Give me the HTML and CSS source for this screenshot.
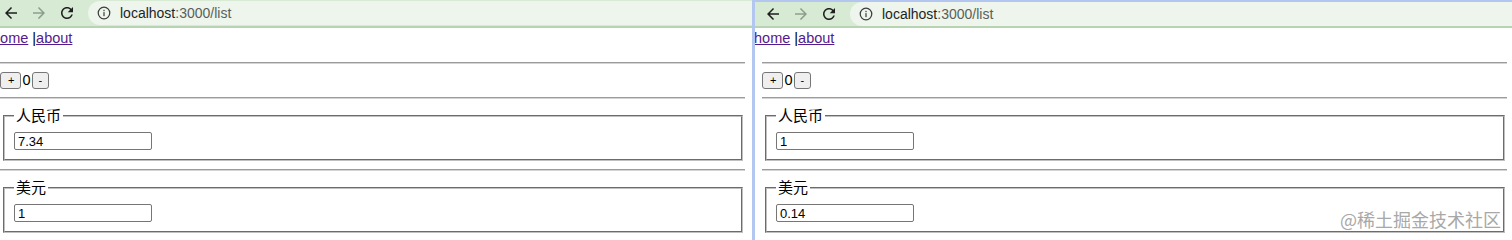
FILE: index.html
```html
<!DOCTYPE html>
<html lang="zh-CN">
<head>
<meta charset="utf-8">
<title>list</title>
<link rel="stylesheet" href="styles.css">
</head>
<body>
<div class="screen">
  <div class="win win-left">
    <div class="toolbar">
      <span class="tb-btn"><svg viewBox="0 0 24 24" width="18" height="18"><path fill="#1f1f1f" d="M20 11H7.83l5.59-5.59L12 4l-8 8 8 8 1.41-1.41L7.83 13H20v-2z"/></svg></span>
      <span class="tb-btn"><svg viewBox="0 0 24 24" width="18" height="18"><path fill="#8e9e8c" d="M12 4l-1.41 1.41L16.17 11H4v2h12.17l-5.58 5.59L12 20l8-8z"/></svg></span>
      <span class="tb-btn"><svg viewBox="0 0 24 24" width="18" height="18"><path fill="#1f1f1f" d="M17.65 6.35C16.2 4.9 14.21 4 12 4c-4.42 0-7.99 3.58-7.99 8s3.57 8 7.99 8c3.73 0 6.84-2.55 7.73-6h-2.08c-.82 2.33-3.04 4-5.65 4-3.31 0-6-2.690-6-6s2.69-6 6-6c1.66 0 3.14.69 4.22 1.78L13 11h7V4l-2.35 2.35z"/></svg></span>
      <div class="omnibox">
        <svg class="info" viewBox="0 0 16 16" width="14" height="14"><circle cx="8" cy="8" r="6.6" fill="none" stroke="#3c3c3c" stroke-width="1.4"/><rect x="7.3" y="7" width="1.4" height="4.6" fill="#3c3c3c"/><rect x="7.3" y="4.4" width="1.4" height="1.5" fill="#3c3c3c"/></svg>
        <span class="url"><span class="host">localhost</span>:3000/list</span>
      </div>
    </div>
    <div class="page">
      <div class="nav"><a href="#" class="link">home</a> |<a href="#" class="link">about</a></div>
      <hr class="rule rule-top">
      <div class="counter"><button class="btn">+</button><span class="count">0</span><button class="btn">-</button></div>
      <hr class="rule">
      <fieldset class="box"><legend class="box-title">人民币</legend><input class="field" value="7.34"></fieldset>
      <hr class="rule">
      <fieldset class="box"><legend class="box-title">美元</legend><input class="field" value="1"></fieldset>
    </div>
  </div>
  <div class="divider"></div>
  <div class="win win-right">
    <div class="toolbar">
      <span class="tb-btn"><svg viewBox="0 0 24 24" width="18" height="18"><path fill="#1f1f1f" d="M20 11H7.83l5.59-5.59L12 4l-8 8 8 8 1.41-1.41L7.83 13H20v-2z"/></svg></span>
      <span class="tb-btn"><svg viewBox="0 0 24 24" width="18" height="18"><path fill="#8e9e8c" d="M12 4l-1.41 1.41L16.17 11H4v2h12.17l-5.58 5.59L12 20l8-8z"/></svg></span>
      <span class="tb-btn"><svg viewBox="0 0 24 24" width="18" height="18"><path fill="#1f1f1f" d="M17.65 6.35C16.2 4.9 14.21 4 12 4c-4.42 0-7.99 3.58-7.99 8s3.57 8 7.99 8c3.73 0 6.84-2.55 7.73-6h-2.08c-.82 2.33-3.04 4-5.65 4-3.31 0-6-2.69-6-6s2.69-6 6-6c1.66 0 3.14.69 4.22 1.78L13 11h7V4l-2.35 2.35z"/></svg></span>
      <div class="omnibox">
        <svg class="info" viewBox="0 0 16 16" width="14" height="14"><circle cx="8" cy="8" r="6.6" fill="none" stroke="#3c3c3c" stroke-width="1.4"/><rect x="7.3" y="7" width="1.4" height="4.6" fill="#3c3c3c"/><rect x="7.3" y="4.4" width="1.4" height="1.5" fill="#3c3c3c"/></svg>
        <span class="url"><span class="host">localhost</span>:3000/list</span>
      </div>
    </div>
    <div class="page">
      <div class="nav"><a href="#" class="link">home</a> |<a href="#" class="link">about</a></div>
      <hr class="rule rule-top">
      <div class="counter"><button class="btn">+</button><span class="count">0</span><button class="btn">-</button></div>
      <hr class="rule">
      <fieldset class="box"><legend class="box-title">人民币</legend><input class="field" value="1"></fieldset>
      <hr class="rule">
      <fieldset class="box"><legend class="box-title">美元</legend><input class="field" value="0.14"></fieldset>
    </div>
  </div>
  <div class="watermark">@稀土掘金技术社区</div>
</div>
</body>
</html>
```
FILE: styles.css
```css
* { box-sizing: border-box; }
html, body { margin: 0; padding: 0; background: #fff; }
body { font-family: "Liberation Sans", "Noto Sans CJK SC", sans-serif; color: #000; }

.screen {
  position: relative;
  display: flex;
  width: 1512px;
  height: 240px;
  overflow: hidden;
}
.win { overflow: hidden; background: #fff; }
.win-left { flex: 0 0 759px; margin-left: -7px; }
.win-right { flex: 1 0 0; min-width: 0; }
.divider { flex: 0 0 3px; background: #b3c6ef; }

.toolbar {
  display: flex;
  align-items: center;
  height: 28px;
  padding: 0 0 0 4px;
  background: #d6ead4;
  border-bottom: 2px solid #b6d3b2;
}
.win-right .toolbar { border-top: 2px solid #b3c6ef; }
.tb-btn {
  display: flex;
  align-items: center;
  justify-content: center;
  width: 28px;
  height: 24px;
}
.omnibox {
  flex: 1;
  display: flex;
  align-items: center;
  height: 24px;
  margin-left: 7px;
  padding-left: 9px;
  background: #edf5ec;
  border-radius: 12px 0 0 12px;
}
.info { flex: none; }
.url {
  margin-left: 9px;
  font-family: "Liberation Sans", sans-serif;
  font-size: 14px;
  color: #5a5f5a;
}
.host { color: #1f1f1f; }

.page { padding-left: 7px; width: 752px; }
.nav {
  margin-left: -8px;
  padding-top: 1px;
  font-size: 14.5px;
  line-height: 18px;
}
.link { color: #551a8b; }

.rule {
  height: 0;
  width: 745px;
  margin: 8px 0;
  border: none;
  border-top: 1px solid #9c9c9c;
  border-bottom: 1px solid #d4d4d4;
}
.rule-top { margin-top: 15px; margin-bottom: 7px; }

.counter {
  display: flex;
  align-items: center;
  height: 18px;
}
.btn {
  height: 17px;
  padding: 0 6px;
  margin: 0;
  font-family: "Liberation Sans", sans-serif;
  font-size: 11px;
  line-height: 15px;
  color: #000;
  background: #efefef;
  border: 1px solid #767676;
  border-radius: 3px;
}
.btn:first-child { padding: 0 6px 0 7px; }
.count { font-size: 14.5px; line-height: 18px; padding: 0 1px; }

.box {
  width: 740px;
  margin: 0 2px 0 3px;
  padding: 7px 9px 9px;
  border: 2px groove #c0c0c0;
}
.box-title {
  padding: 0 2px;
  font-size: 15px;
  line-height: 18px;
}
.field {
  display: block;
  width: 138px;
  height: 18px;
  padding: 0 3px;
  font-family: "Liberation Sans", sans-serif;
  font-size: 13px;
  color: #000;
  border: 1px solid #767676;
  border-radius: 2px;
  background: #fff;
}

.watermark {
  position: absolute;
  right: 11px;
  bottom: 10px;
  font-family: "Noto Sans CJK SC", sans-serif;
  font-size: 18px;
  line-height: 22px;
  color: #a8a8a8;
}
```
